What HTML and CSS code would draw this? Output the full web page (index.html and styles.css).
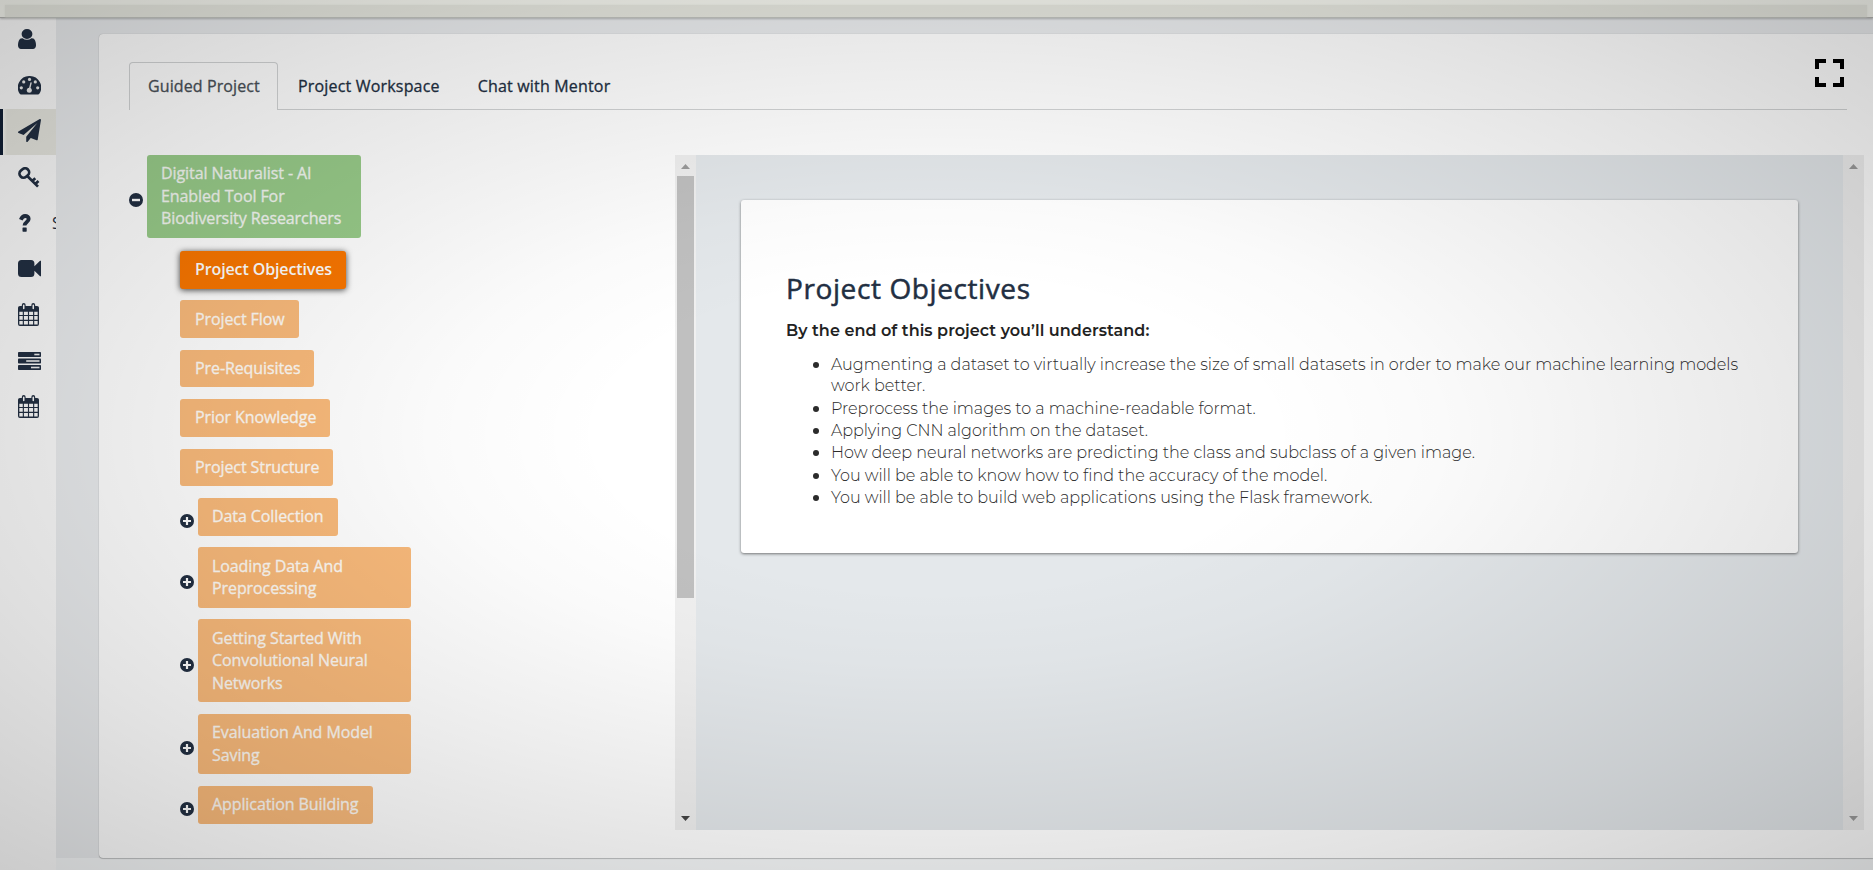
FILE: index.html
```html
<!DOCTYPE html>
<html lang="en">
<head>
<meta charset="utf-8">
<title>Guided Project</title>
<link rel="stylesheet" href="styles.css">
</head>
<body>
<svg class="defs" aria-hidden="true">
  <symbol id="calendar" viewBox="0 0 22 24">
    <path fill-rule="evenodd" d="M2 3H4V2Q4 0 6 0T8 2V3H14V2Q14 0 16 0T18 2V3H20Q22 3 22 5V22Q22 24 20 24H2Q0 24 0 22V5Q0 3 2 3ZM5.2 2.2V5.8Q5.2 6.5 6 6.5T6.8 5.8V2.2Q6.8 1.5 6 1.5T5.2 2.2ZM15.2 2.2V5.8Q15.2 6.5 16 6.5T16.8 5.8V2.2Q16.8 1.5 16 1.5T15.2 2.2ZM1.4 9V12.4H5V9ZM6.2 9V12.4H10.4V9ZM11.6 9V12.4H15.8V9ZM17 9V12.4H20.6V9ZM1.4 13.6V17.6H5V13.6ZM6.2 13.6V17.6H10.4V13.6ZM11.6 13.6V17.6H15.8V13.6ZM17 13.6V17.6H20.6V13.6ZM1.4 18.8V22.6H5V18.8ZM6.2 18.8V22.6H10.4V18.8ZM11.6 18.8V22.6H15.8V18.8ZM17 18.8V22.6H20.6V18.8Z"/>
  </symbol>
  <symbol id="plus" viewBox="0 0 14 14"><circle cx="7" cy="7" r="7"/><path d="M7 3v8M3 7h8" stroke="#fff" stroke-width="2.2"/></symbol>
  <symbol id="minus" viewBox="0 0 14 14"><circle cx="7" cy="7" r="7"/><path d="M3 7h8" stroke="#fff" stroke-width="2.4"/></symbol>
</svg>
<div class="app">
  <header class="topbar"><div class="topbar-band"></div></header>
  <div class="body">
    <nav class="sidebar">
      <a class="nav-item"><svg width="18" height="20" viewBox="256 128 1280 1536" preserveAspectRatio="none"><path d="M1536 1399q0 109-62.5 187t-150.5 78h-854q-88 0-150.5-78t-62.5-187q0-85 8.5-160.5t31.5-152 58.5-131 94-89 134.5-34.5q131 128 313 128t313-128q76 0 134.5 34.5t94 89 58.5 131 31.5 152 8.5 160.5zm-256-887q0 159-112.5 271.5t-271.5 112.5-271.5-112.5-112.5-271.5 112.5-271.5 271.5-112.5 271.5 112.5 112.5 271.5z"/></svg></a>
      <a class="nav-item nav-dashboard"><svg width="23" height="19" viewBox="0 0 23 19"><path d="M11.5 0A11.5 11.5 0 0 1 21.3 17.8Q20.8 18.6 20 18.6H3Q2.2 18.6 1.7 17.8A11.5 11.5 0 0 1 11.5 0Z"/><g fill="#ececec"><circle cx="3.3" cy="11.8" r="1.6"/><circle cx="5.7" cy="5.9" r="1.6"/><circle cx="11.5" cy="3.4" r="1.6"/><circle cx="17.3" cy="5.9" r="1.6"/><circle cx="19.7" cy="11.8" r="1.6"/><circle cx="11.3" cy="14.2" r="2.5"/></g><path d="M11.4 13.5L13 7" stroke="#ececec" stroke-width="1.4" stroke-linecap="round"/></svg></a>
      <a class="nav-item nav-active"><svg width="23" height="23" viewBox="0 0 1792 1792"><path d="M1764 11q33 24 27 64l-256 1536q-5 29-32 45-14 8-31 8-11 0-24-5l-453-185-242 295q-18 23-49 23-13 0-22-4-19-7-30.5-23.5t-11.5-36.5v-349l864-1059-1069 925-395-162q-37-14-40-55-2-40 32-59l1664-960q15-9 32-9 20 0 36 11z"/></svg></a>
      <a class="nav-item nav-key"><svg width="22" height="21" viewBox="0 0 22 21" fill="none" stroke="#222f42"><rect x="-5" y="-4" width="10" height="8" rx="3.8" transform="translate(6.3 6) rotate(-42)" stroke-width="2.7"/><path d="M9.5 9.3L20 19.6M14.2 14L17.3 11.2M17.3 17L20.5 14" stroke-width="2.7"/></svg></a>
      <a class="nav-item nav-help"><svg width="14" height="18" viewBox="0 0 14 18"><path d="M2.8 5.8C4 2.9 5.4 2 7.1 2 9.2 2 10.7 3.2 10.7 5c0 3-4.2 2.9-4.2 6.6" fill="none" stroke="#222f42" stroke-width="3.8"/><rect x="4.5" y="13.5" width="4.2" height="4.2" rx=".6"/></svg><span class="nav-label">S</span></a>
      <a class="nav-item"><svg width="23" height="17" viewBox="0 0 23 17"><path d="M3.5 0H13Q16.4 0 16.4 3.5V6.3L21.8.9Q22.2.5 23 .8V16.2Q22.2 16.5 21.8 16.1L16.4 10.7V13.5Q16.4 17 13 17H3.5Q0 17 0 13.5V3.5Q0 0 3.5 0Z"/></svg></a>
      <a class="nav-item"><svg width="21" height="23"><use href="#calendar"/></svg></a>
      <a class="nav-item"><svg width="23" height="18" viewBox="0 0 23 18"><g><rect width="23" height="5" rx=".8"/><rect y="6.5" width="23" height="5" rx=".8"/><rect y="13" width="23" height="5" rx=".8"/></g><g fill="#eee"><rect x="16.3" y="1.7" width="5.2" height="1.6"/><rect x="8.2" y="8.2" width="13.3" height="1.6"/><rect x="13" y="14.7" width="8.5" height="1.6"/></g></svg></a>
      <a class="nav-item"><svg width="21" height="23"><use href="#calendar"/></svg></a>
    </nav>
    <main class="page">
      <section class="card">
        <div class="tabs">
          <a class="tab tab-active">Guided Project</a>
          <a class="tab">Project Workspace</a>
          <a class="tab">Chat with Mentor</a>
          <svg class="fullscreen" width="29" height="28" viewBox="0 0 29 28"><path d="M2 10V2H11M18 2H27V10M27 18V26H18M11 26H2V18" fill="none" stroke="#000" stroke-width="4"/></svg>
        </div>
        <div class="workspace">
          <div class="tree">
            <div class="row row-root"><svg class="toggle" width="14" height="14"><use href="#minus"/></svg><div class="node node-root">Digital Naturalist - AI<br>Enabled Tool For<br>Biodiversity Researchers</div></div>
            <div class="branch">
              <div class="row"><div class="node node-current">Project Objectives</div></div>
              <div class="row"><div class="node w-flow">Project Flow</div></div>
              <div class="row"><div class="node w-pre">Pre-Requisites</div></div>
              <div class="row"><div class="node w-prior">Prior Knowledge</div></div>
              <div class="row"><div class="node w-structure">Project Structure</div></div>
              <div class="row"><svg class="toggle" width="14" height="14"><use href="#plus"/></svg><div class="node w-data">Data Collection</div></div>
              <div class="row"><svg class="toggle" width="14" height="14"><use href="#plus"/></svg><div class="node node-wide">Loading Data And<br>Preprocessing</div></div>
              <div class="row"><svg class="toggle" width="14" height="14"><use href="#plus"/></svg><div class="node node-wide">Getting Started With<br>Convolutional Neural<br>Networks</div></div>
              <div class="row"><svg class="toggle" width="14" height="14"><use href="#plus"/></svg><div class="node node-wide">Evaluation And Model<br>Saving</div></div>
              <div class="row"><svg class="toggle" width="14" height="14"><use href="#plus"/></svg><div class="node w-app">Application Building</div></div>
            </div>
          </div>
          <div class="scroll">
            <svg class="arrow arrow-off" width="9" height="5" viewBox="0 0 9 5"><path d="M0 5L4.5 0 9 5Z"/></svg>
            <div class="thumb"></div>
            <svg class="arrow arrow-end" width="9" height="5" viewBox="0 0 9 5"><path d="M0 0H9L4.5 5Z"/></svg>
          </div>
          <div class="viewer">
            <article class="doc">
              <h2 class="doc-title">Project Objectives</h2>
              <p class="doc-lead">By the end of this project you’ll understand:</p>
              <ul class="doc-list">
                <li>Augmenting a dataset to virtually increase the size of small datasets in order to make our machine learning models<br>work better.</li>
                <li>Preprocess the images to a machine-readable format.</li>
                <li>Applying CNN algorithm on the dataset.</li>
                <li>How deep neural networks are predicting the class and subclass of a given image.</li>
                <li>You will be able to know how to find the accuracy of the model.</li>
                <li>You will be able to build web applications using the Flask framework.</li>
              </ul>
            </article>
          </div>
          <div class="scroll">
            <svg class="arrow arrow-off" width="9" height="5" viewBox="0 0 9 5"><path d="M0 5L4.5 0 9 5Z"/></svg>
            <svg class="arrow arrow-off arrow-end" width="9" height="5" viewBox="0 0 9 5"><path d="M0 0H9L4.5 5Z"/></svg>
          </div>
        </div>
      </section>
    </main>
  </div>
  <div class="vignette"></div>
</div>
</body>
</html>
```
FILE: styles.css
```css
* { box-sizing: border-box; }
body { margin: 0; overflow: hidden; font-family: "Open Sans", "Noto Sans", sans-serif; font-size: 16px; color: #222f42; }
.defs { position: absolute; width: 0; height: 0; }
.app { position: relative; display: flex; flex-direction: column; width: 1873px; height: 870px; background: #ebeded; }
.topbar { height: 18px; flex: none; padding: 5px 6px 0 5px; background: #f5f6ef; border-bottom: 1px solid #b2b3b0; box-shadow: 0 1px 2px rgba(0,0,0,.25); position: relative; }
.topbar-band { height: 12px; background: #e7e8e0; box-shadow: 0 0 2px #e7e8e0; }
.body { display: flex; flex: 1; min-height: 0; }
.sidebar { width: 56px; flex: none; background: #fbfbfb; overflow: hidden; }
.nav-item { display: flex; align-items: center; height: 46px; padding: 0 0 3px 18px; fill: #222f42; }
.nav-item svg { flex: none; }
.nav-item:first-child { height: 45px; padding-bottom: 3px; }
.nav-dashboard, .nav-key { padding-bottom: 1px; }
.nav-active { border-left: 3px solid #101e33; padding-left: 15px; background: linear-gradient(90deg, #f8f8f4, #e7e7e0 4px); }
.nav-help { gap: 20px; font-size: 16px; }
.nav-label { white-space: nowrap; }
.page { flex: 1; padding: 16px 0 0 43px; background: linear-gradient(#eaecee 840px, #f5f7f8 840px); }
.card { height: 824px; padding: 28px 9px 0 30px; background: #fff; border-radius: 4px 0 0 4px; box-shadow: 0 0 1px rgba(0,0,0,.3), 0 1px 1px rgba(0,0,0,.2); }
.tabs { display: flex; height: 48px; margin-right: 17px; border-bottom: 1px solid #d2d4d5; white-space: nowrap; letter-spacing: .18px; -webkit-text-stroke: .3px currentColor; }
.tab { height: 48px; padding: 13px 18px 0 20px; line-height: 22px; }
.tab-active { width: 149px; padding: 12px 0 0 18px; background: #fff; border: 1px solid #d2d4d5; border-bottom: 0; border-radius: 4px 4px 0 0; color: #495057; letter-spacing: .1px; }
.fullscreen { margin: -3px 3px 0 auto; }
.workspace { display: flex; height: 675px; margin-top: 45px; }
.tree { width: 546px; flex: none; }
.row { display: flex; align-items: center; gap: 4px; margin-bottom: 11.65px; }
.row-root { margin-bottom: 13px; }
.toggle { flex: none; margin-top: 8px; fill: #222f42; }
.branch { padding-left: 51px; }
.node { padding: 7.3px 14px 8px; border-radius: 3px; background: #f9ba7b; color: #fffaf4; line-height: 22.5px; letter-spacing: -.09px; white-space: nowrap; -webkit-text-stroke: .3px currentColor; }
.node-root { width: 214px; background: #98cb89; color: #f3f7f1; }
.node-current { width: 166px; padding-left: 15px; background: #f97600; color: #fff; box-shadow: 0 1px 6px rgba(0,0,0,.75); font-weight: 600; letter-spacing: -.12px; -webkit-text-stroke: 0; }
.w-flow, .w-pre, .w-prior, .w-structure { padding-left: 15px; }
.node-wide { width: 213px; }
.w-flow { width: 119px; }
.w-pre { width: 134px; }
.w-prior { width: 150px; }
.w-structure { width: 153px; }
.w-data { width: 140px; }
.w-app { width: 175px; }
.scroll { display: flex; flex-direction: column; align-items: center; width: 21px; flex: none; padding: 9px 0; background: #f0f0f0; }
.thumb { width: 17px; height: 422px; margin-top: 7px; background: #c0c0c0; }
.arrow { fill: #444; }
.arrow-off { fill: #9c9c9c; }
.arrow-end { margin-top: auto; }
.viewer { flex: 1; padding: 45px 45px 0; background: #e4e8eb; }
.doc { height: 353px; padding: 69px 40px 0 45px; background: #fff; border-radius: 3px; box-shadow: 0 1px 3px rgba(0,0,0,.5); }
.doc-title { margin: 0; font-size: 28px; line-height: 38px; font-weight: 400; letter-spacing: .6px; -webkit-text-stroke: .5px currentColor; }
.doc-lead { margin: 13px 0 0; font: 600 16px/22px Montserrat, Inter, sans-serif; letter-spacing: .06px; color: #222; white-space: nowrap; }
.doc-list { margin: 12px 0 0; padding-left: 45px; font: 300 16px/21.2px Montserrat, Inter, sans-serif; letter-spacing: -.02px; color: #2b2b2b; white-space: nowrap; }
.doc-list li { margin-bottom: 1.15px; }
.doc-list li::marker { font-size: 18px; }
.vignette { position: absolute; inset: 0; pointer-events: none; background: radial-gradient(ellipse farthest-corner, rgba(0,0,0,0) 25%, rgba(0,0,0,.02) 38%, rgba(0,0,0,.075) 60%, rgba(0,0,0,.115) 75%, rgba(0,0,0,.19) 100%); }
```
